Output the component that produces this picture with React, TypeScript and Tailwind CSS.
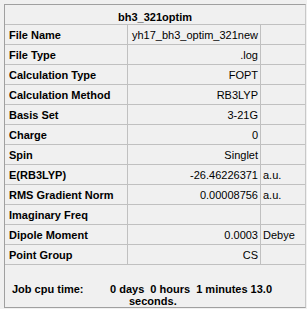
import React from "react";

type Row = { label: string; value?: string; unit?: string };

const rows: Row[] = [
  { label: "File Name", value: "yh17_bh3_optim_321new" },
  { label: "File Type", value: ".log" },
  { label: "Calculation Type", value: "FOPT" },
  { label: "Calculation Method", value: "RB3LYP" },
  { label: "Basis Set", value: "3-21G" },
  { label: "Charge", value: "0" },
  { label: "Spin", value: "Singlet" },
  { label: "E(RB3LYP)", value: "-26.46226371", unit: "a.u." },
  { label: "RMS Gradient Norm", value: "0.00008756", unit: "a.u." },
  { label: "Imaginary Freq" },
  { label: "Dipole Moment", value: "0.0003", unit: "Debye" },
  { label: "Point Group", value: "CS" },
];

export default function App() {
  return (
    <div
      className="w-[307px] h-[309px] bg-[#f0f0f0] pt-[4px] pl-[4px] text-[11px] leading-[12px] text-black"
      style={{ fontFamily: "'Liberation Sans', Arial, sans-serif" }}
    >
      <div className="w-[302px] h-[304px] flex flex-col border border-[#a0a0a0] border-r-[#c8c8c8]">
        {/* Title */}
        <div className="h-[20px] shrink-0 border-b border-[#c0c0c0] flex justify-center pt-[6px] font-bold">
          bh3_321optim
        </div>

        {/* Property rows */}
        {rows.map((r) => (
          <div key={r.label} className="h-[20px] shrink-0 flex border-b border-[#c0c0c0]">
            <div className="w-[123px] border-r border-[#c0c0c0] flex items-center pl-[4px] font-bold">
              {r.label}
            </div>
            <div className="w-[133px] border-r border-[#c0c0c0] flex items-center justify-end pr-[2px]">
              {r.value}
            </div>
            <div className="flex-1 flex items-center pl-[2px]">{r.unit}</div>
          </div>
        ))}

        {/* Job time */}
        <div className="flex-1 flex pt-[18px] pl-[7px] font-bold">
          <div className="w-[98px] shrink-0">Job cpu time:</div>
          <div className="flex flex-col">
            <span className="whitespace-pre">0 days  0 hours  1 minutes 13.0</span>
            <span className="pl-[19px]">seconds.</span>
          </div>
        </div>
      </div>
    </div>
  );
}
